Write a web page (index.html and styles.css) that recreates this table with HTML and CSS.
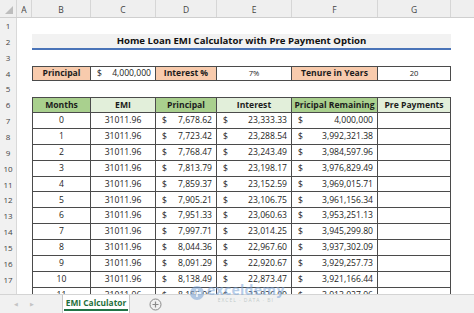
FILE: index.html
```html
<!DOCTYPE html>
<html>
<head>
<meta charset="utf-8">
<link rel="stylesheet" href="styles.css">
</head>
<body>
<div class="app">
  <div class="sheet">
    <div class="r colhead">
      <div class="corner"><svg width="8" height="8" viewBox="0 0 8 8"><polygon points="8,0 8,8 0,8" fill="#bdbdbd"/></svg></div>
      <div class="ch">A</div><div class="ch">B</div><div class="ch">C</div><div class="ch">D</div><div class="ch">E</div><div class="ch">F</div><div class="ch">G</div><div class="ch last"></div>
    </div>
    <div class="r"><div class="rh">1</div></div>
    <div class="r"><div class="rh">2</div><div></div><div class="title">Home Loan EMI Calculator with Pre Payment Option</div></div>
    <div class="r"><div class="rh">3</div></div>
    <div class="r inputs"><div class="rh">4</div><div></div>
      <div class="c lbl first">Principal</div>
      <div class="c dol"><span>$</span><span>4,000,000</span></div>
      <div class="c lbl">Interest %</div>
      <div class="c ctr sm">7%</div>
      <div class="c lbl">Tenure in Years</div>
      <div class="c ctr sm">20</div>
    </div>
    <div class="r"><div class="rh">5</div></div>
    <div class="r tbl thead"><div class="rh">6</div><div></div>
      <div class="c dk first">Months</div><div class="c lt">EMI</div><div class="c dk">Principal</div><div class="c lt">Interest</div><div class="c dk">Pricipal Remaining</div><div class="c lt">Pre Payments</div>
    </div>
    <div class="r tbl"><div class="rh">7</div><div></div><div class="c ctr first">0</div><div class="c ctr">31011.96</div><div class="c dol"><span>$</span><span>7,678.62</span></div><div class="c dol"><span>$</span><span>23,333.33</span></div><div class="c dol"><span>$</span><span>4,000,000</span></div><div class="c"></div></div>
    <div class="r tbl"><div class="rh">8</div><div></div><div class="c ctr first">1</div><div class="c ctr">31011.96</div><div class="c dol"><span>$</span><span>7,723.42</span></div><div class="c dol"><span>$</span><span>23,288.54</span></div><div class="c dol"><span>$</span><span>3,992,321.38</span></div><div class="c"></div></div>
    <div class="r tbl"><div class="rh">9</div><div></div><div class="c ctr first">2</div><div class="c ctr">31011.96</div><div class="c dol"><span>$</span><span>7,768.47</span></div><div class="c dol"><span>$</span><span>23,243.49</span></div><div class="c dol"><span>$</span><span>3,984,597.96</span></div><div class="c"></div></div>
    <div class="r tbl"><div class="rh">10</div><div></div><div class="c ctr first">3</div><div class="c ctr">31011.96</div><div class="c dol"><span>$</span><span>7,813.79</span></div><div class="c dol"><span>$</span><span>23,198.17</span></div><div class="c dol"><span>$</span><span>3,976,829.49</span></div><div class="c"></div></div>
    <div class="r tbl"><div class="rh">11</div><div></div><div class="c ctr first">4</div><div class="c ctr">31011.96</div><div class="c dol"><span>$</span><span>7,859.37</span></div><div class="c dol"><span>$</span><span>23,152.59</span></div><div class="c dol"><span>$</span><span>3,969,015.71</span></div><div class="c"></div></div>
    <div class="r tbl"><div class="rh">12</div><div></div><div class="c ctr first">5</div><div class="c ctr">31011.96</div><div class="c dol"><span>$</span><span>7,905.21</span></div><div class="c dol"><span>$</span><span>23,106.75</span></div><div class="c dol"><span>$</span><span>3,961,156.34</span></div><div class="c"></div></div>
    <div class="r tbl"><div class="rh">13</div><div></div><div class="c ctr first">6</div><div class="c ctr">31011.96</div><div class="c dol"><span>$</span><span>7,951.33</span></div><div class="c dol"><span>$</span><span>23,060.63</span></div><div class="c dol"><span>$</span><span>3,953,251.13</span></div><div class="c"></div></div>
    <div class="r tbl"><div class="rh">14</div><div></div><div class="c ctr first">7</div><div class="c ctr">31011.96</div><div class="c dol"><span>$</span><span>7,997.71</span></div><div class="c dol"><span>$</span><span>23,014.25</span></div><div class="c dol"><span>$</span><span>3,945,299.80</span></div><div class="c"></div></div>
    <div class="r tbl"><div class="rh">15</div><div></div><div class="c ctr first">8</div><div class="c ctr">31011.96</div><div class="c dol"><span>$</span><span>8,044.36</span></div><div class="c dol"><span>$</span><span>22,967.60</span></div><div class="c dol"><span>$</span><span>3,937,302.09</span></div><div class="c"></div></div>
    <div class="r tbl"><div class="rh">16</div><div></div><div class="c ctr first">9</div><div class="c ctr">31011.96</div><div class="c dol"><span>$</span><span>8,091.29</span></div><div class="c dol"><span>$</span><span>22,920.67</span></div><div class="c dol"><span>$</span><span>3,929,257.73</span></div><div class="c"></div></div>
    <div class="r tbl"><div class="rh">17</div><div></div><div class="c ctr first">10</div><div class="c ctr">31011.96</div><div class="c dol"><span>$</span><span>8,138.49</span></div><div class="c dol"><span>$</span><span>22,873.47</span></div><div class="c dol"><span>$</span><span>3,921,166.44</span></div><div class="c"></div></div>
    <div class="r tbl"><div class="rh">18</div><div></div><div class="c ctr first">11</div><div class="c ctr">31011.96</div><div class="c dol"><span>$</span><span>8,185.96</span></div><div class="c dol"><span>$</span><span>22,826.00</span></div><div class="c dol"><span>$</span><span>3,913,027.96</span></div><div class="c"></div></div>
  </div>
  <div class="tabs">
    <div class="nav"><span class="arr">&#9664;</span><span class="arr">&#9654;</span></div>
    <div class="tab"><span>EMI Calculator</span></div>
    <div class="add"><svg width="13" height="13" viewBox="0 0 13 13"><circle cx="6.5" cy="6.5" r="5.5" fill="none" stroke="#8a8a8a" stroke-width="1"/><path d="M6.5 3.5v6M3.5 6.5h6" stroke="#8a8a8a" stroke-width="1.2"/></svg></div>
  </div>
  <div class="watermark">
    <svg width="16" height="16" viewBox="0 0 16 16"><circle cx="8" cy="8" r="7" fill="#7aa3d6"/><path d="M4 8h8M8 4v8" stroke="#fff" stroke-width="1.5"/></svg>
    <div class="wm-text"><span class="wm-big">exceldemy</span><span class="wm-small">EXCEL · DATA · BI</span></div>
  </div>
</div>
</body>
</html>
```

FILE: styles.css
```css
* { box-sizing: border-box; }
html, body { margin: 0; padding: 0; }
body {
  width: 474px;
  height: 313px;
  overflow: hidden;
  background: #fff;
  font-family: "Open Sans", "Liberation Sans", sans-serif;
  color: #1c1c1c;
}
.app {
  position: relative;
  width: 474px;
  height: 313px;
  display: flex;
  flex-direction: column;
}
.sheet {
  height: 294px;
  overflow: hidden;
  background: #fff;
}
.r {
  display: grid;
  grid-template-columns: 17px 15px 59px 65px 61px 75px 86px 73px 1fr;
  height: 15.87px;
  font-size: 8.6px;
  line-height: 1;
}
.colhead {
  height: 18px;
  background: #efefef;
  border-bottom: 1px solid #cfcfcf;
}
.corner {
  display: flex;
  align-items: flex-end;
  justify-content: flex-end;
  padding: 0 3px 3px 0;
  border-right: 1px solid #d6d6d6;
}
.ch {
  display: flex;
  align-items: center;
  justify-content: center;
  color: #444;
  font-size: 8.5px;
  border-right: 1px solid #d6d6d6;
  padding-top: 3px;
}
.ch.last { border-right: none; }
.rh {
  background: #f1f1f1;
  color: #444;
  font-size: 8px;
  display: flex;
  align-items: center;
  justify-content: center;
  border-right: 1px solid #d9d9d9;
}
.title {
  grid-column: 3 / 9;
  background: #f2f2f2;
  border-bottom: 2px solid #4a74b8;
  font-weight: 700;
  font-size: 9.6px;
  display: flex;
  align-items: center;
  justify-content: center;
  color: #111;
}
.c {
  display: flex;
  align-items: center;
  border-right: 1px solid #4b4b4b;
  border-bottom: 1px solid #4b4b4b;
  background: #fff;
  white-space: nowrap;
}
.c.first { border-left: 1px solid #4b4b4b; }
.inputs .c { border-top: 1px solid #4b4b4b; }
.thead .c { border-top: 1px solid #4b4b4b; }
.ctr { justify-content: center; }
.sm { font-size: 7.6px; }
.lbl {
  background: #f8cbad;
  font-weight: 700;
  justify-content: center;
}
.dk { background: #a9d08e; font-weight: 700; justify-content: center; }
.lt { background: #e2efda; font-weight: 700; justify-content: center; }
.dol {
  justify-content: space-between;
  padding: 0 4px 0 6px;
}
.tabs {
  height: 19px;
  background: #f1f1f1;
  border-top: 1px solid #d4d4d4;
  display: flex;
  align-items: stretch;
}
.nav {
  width: 62px;
  display: flex;
  align-items: center;
  gap: 12px;
  padding-left: 14px;
}
.arr { font-size: 5px; color: #c4c4c4; }
.tab {
  width: 68px;
  background: #fff;
  border-left: 1px solid #c8c8c8;
  border-right: 1px solid #c8c8c8;
  display: flex;
  justify-content: center;
  align-items: flex-start;
  padding-top: 3px;
}
.tab span {
  color: #1f6f3c;
  font-weight: 700;
  font-size: 8.4px;
  border-bottom: 2px solid #217346;
  padding: 0 2px 1px;
  line-height: 1.2;
}
.add {
  display: flex;
  align-items: center;
  padding-left: 19px;
}
.watermark {
  position: absolute;
  left: 189px;
  top: 283px;
  display: flex;
  align-items: center;
  gap: 2px;
  opacity: 0.55;
}
.wm-text { display: flex; flex-direction: column; align-items: center; }
.wm-big { font-size: 14px; font-weight: 700; color: #7aa3d6; line-height: 1; letter-spacing: 0.3px; }
.wm-small { font-size: 5px; color: #9aa; letter-spacing: 1px; line-height: 1.2; }
```
